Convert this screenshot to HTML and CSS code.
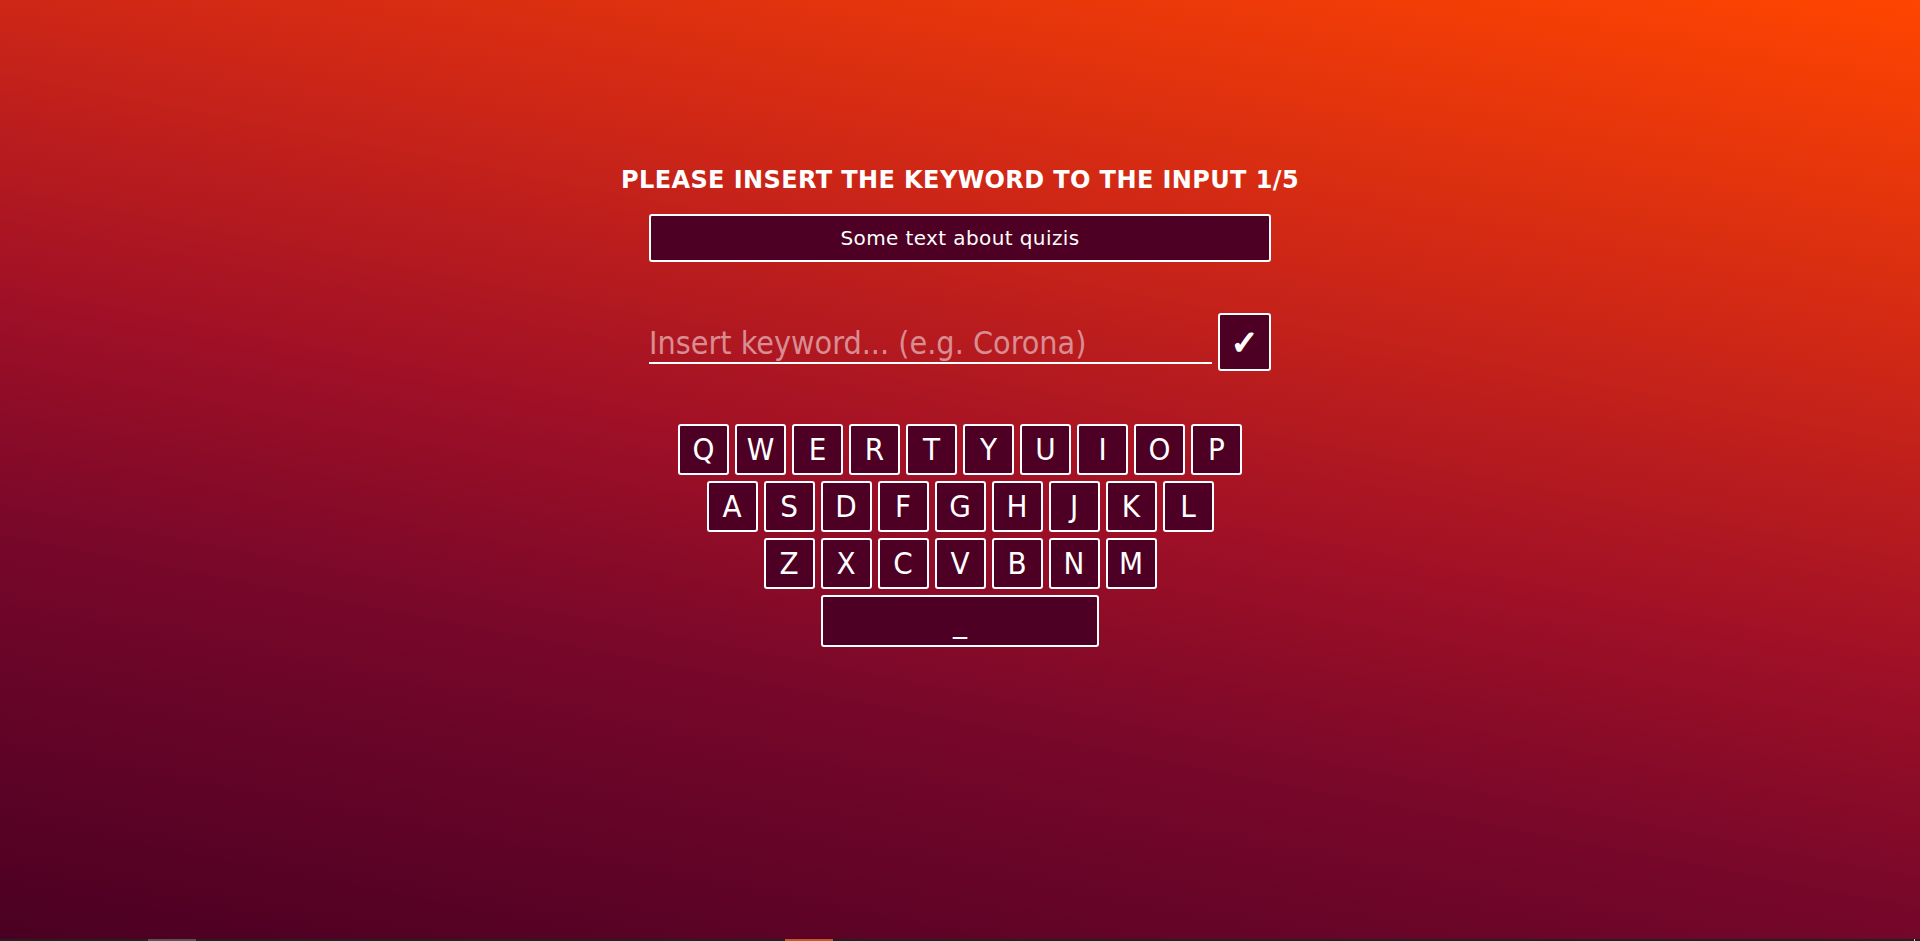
FILE: index.html
```html
<!DOCTYPE html>
<html lang="en">
<head>
<meta charset="utf-8">
<title>Quiz</title>
<link rel="stylesheet" href="styles.css">
</head>
<body>
<div class="page">
  <main class="quiz">
    <h1 class="title">PLEASE INSERT THE KEYWORD TO THE INPUT 1/5</h1>
    <div class="question">Some text about quizis</div>
    <form class="answer" onsubmit="return false">
      <input class="keyword" type="text" placeholder="Insert keyword... (e.g. Corona)">
      <button class="submit" type="button">✓</button>
    </form>
    <div class="keyboard">
      <div class="row">
        <button class="key">Q</button><button class="key">W</button><button class="key">E</button><button class="key">R</button><button class="key">T</button><button class="key">Y</button><button class="key">U</button><button class="key">I</button><button class="key">O</button><button class="key">P</button>
      </div>
      <div class="row">
        <button class="key">A</button><button class="key">S</button><button class="key">D</button><button class="key">F</button><button class="key">G</button><button class="key">H</button><button class="key">J</button><button class="key">K</button><button class="key">L</button>
      </div>
      <div class="row">
        <button class="key">Z</button><button class="key">X</button><button class="key">C</button><button class="key">V</button><button class="key">B</button><button class="key">N</button><button class="key">M</button>
      </div>
      <div class="row">
        <button class="key space">_</button>
      </div>
    </div>
  </main>
  <div class="taskbar">
    <span class="task gray"></span>
    <span class="task orange"></span>
    <span class="spacer"></span>
    <span class="tick"></span>
  </div>
</div>
</body>
</html>
```
FILE: styles.css
```css
html, body {
  margin: 0;
  padding: 0;
  height: 100%;
}
body {
  font-family: "DejaVu Sans Condensed", "DejaVu Sans", sans-serif;
  color: #fff;
  background: #4a0022;
  overflow: hidden;
}
.page {
  height: 100vh;
  display: flex;
  flex-direction: column;
}
.quiz {
  flex: 1;
  display: flex;
  flex-direction: column;
  align-items: center;
  padding-top: 166px;
  background: linear-gradient(11deg, #4a0022 0%, #76072a 30%, #a01026 49%, #cd2617 71%, #ff4500 100%);
}
.title {
  margin: 0;
  font-family: "DejaVu Sans", sans-serif;
  font-size: 24px;
  line-height: 28px;
  font-weight: bold;
  letter-spacing: 0.4px;
}
.question {
  margin-top: 20px;
  width: 622px;
  height: 48px;
  box-sizing: border-box;
  border: 2px solid #fff;
  border-radius: 3px;
  background: #4e0024;
  display: flex;
  align-items: center;
  justify-content: center;
  font-family: "DejaVu Sans", sans-serif;
  font-size: 20px;
  letter-spacing: 0.4px;
}
.answer {
  margin: 51px 0 0;
  width: 622px;
  display: flex;
  gap: 6px;
}
.keyword {
  flex: 1;
  min-width: 0;
  height: 51px;
  box-sizing: border-box;
  padding: 10px 0 0 0;
  border: none;
  border-bottom: 2px solid #fff;
  background: transparent;
  color: #fff;
  font-family: inherit;
  font-size: 32px;
  outline: none;
}
.keyword::placeholder {
  color: #d98c91;
  opacity: 1;
}
.submit {
  width: 53px;
  height: 58px;
  box-sizing: border-box;
  border: 2px solid #fff;
  border-radius: 3px;
  background: #4e0024;
  color: #fff;
  font-family: "DejaVu Sans", sans-serif;
  font-weight: bold;
  font-size: 33px;
  line-height: 1;
  padding: 0;
  -webkit-text-stroke: 1.6px #fff;
}
.keyboard {
  margin-top: 53px;
  display: flex;
  flex-direction: column;
  align-items: center;
  gap: 6px;
}
.row {
  display: flex;
  gap: 6px;
}
.key {
  width: 51px;
  height: 51px;
  box-sizing: border-box;
  border: 2px solid #fff;
  border-radius: 3px;
  background: #4e0024;
  color: #fff;
  font-family: "DejaVu Sans Condensed", "DejaVu Sans", sans-serif;
  font-size: 31px;
  padding: 0;
  line-height: 1;
}
.key.space {
  width: 278px;
  height: 52px;
}
.taskbar {
  height: 2px;
  background: #1e2222;
  display: flex;
}
.task {
  height: 2px;
  width: 48px;
}
.task.gray {
  margin-left: 148px;
  background: #555555;
}
.task.orange {
  margin-left: 589px;
  background: #c05a2a;
}
.spacer {
  flex: 1;
}
.tick {
  width: 1px;
  margin-right: 5px;
  background: #cccccc;
}
```
